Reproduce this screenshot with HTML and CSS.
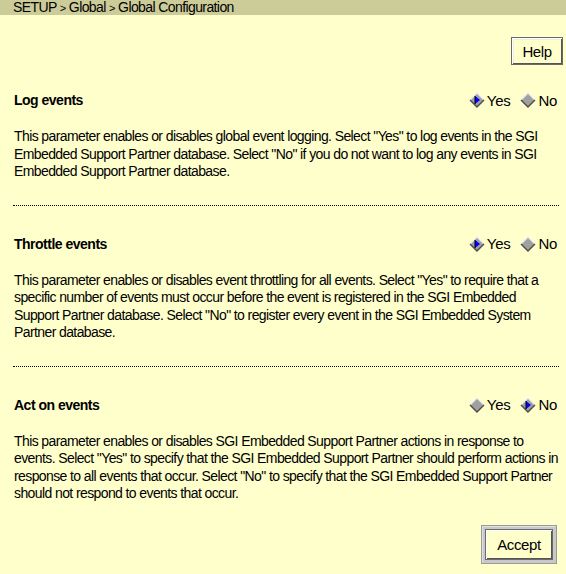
FILE: index.html
```html
<!DOCTYPE html>
<html>
<head>
<meta charset="utf-8">
<link rel="stylesheet" href="styles.css">
</head>
<body>
<div class="crumb">SETUP <span class="gt">&gt;</span> Global <span class="gt">&gt;</span> Global Configuration</div>
<div class="toolbar"><button class="btn help">Help</button></div>

<div class="section first">
  <div class="row">
    <span class="title">Log events</span>
    <div class="radios">
      <span class="opt"><svg class="dia" width="16" height="16" viewBox="0 0 16 16"><polygon points="8,1 15,8 8,15 1,8" fill="#a0a0a0"/><polyline points="1,8 8,1 15,8" fill="none" stroke="#ececec" stroke-width="1.4"/><polyline points="1,8 8,15 15,8" fill="none" stroke="#4a4a4a" stroke-width="1.4"/><polygon points="6,4 11,8 6,12" fill="#0000ff"/><line x1="6" y1="4" x2="6" y2="12" stroke="#000" stroke-width="1"/></svg>Yes</span>
      <span class="opt"><svg class="dia" width="16" height="16" viewBox="0 0 16 16"><polygon points="8,1 15,8 8,15 1,8" fill="#a0a0a0"/><polyline points="1,8 8,1 15,8" fill="none" stroke="#ececec" stroke-width="1.4"/><polyline points="1,8 8,15 15,8" fill="none" stroke="#4a4a4a" stroke-width="1.4"/></svg>No</span>
    </div>
  </div>
  <p class="desc">This parameter enables or disables global event logging. Select "Yes" to log events in the SGI Embedded Support Partner database. Select "No" if you do not want to log any events in SGI Embedded Support Partner database.</p>
</div>
<div class="sep"></div>

<div class="section">
  <div class="row">
    <span class="title">Throttle events</span>
    <div class="radios">
      <span class="opt"><svg class="dia" width="16" height="16" viewBox="0 0 16 16"><polygon points="8,1 15,8 8,15 1,8" fill="#a0a0a0"/><polyline points="1,8 8,1 15,8" fill="none" stroke="#ececec" stroke-width="1.4"/><polyline points="1,8 8,15 15,8" fill="none" stroke="#4a4a4a" stroke-width="1.4"/><polygon points="6,4 11,8 6,12" fill="#0000ff"/><line x1="6" y1="4" x2="6" y2="12" stroke="#000" stroke-width="1"/></svg>Yes</span>
      <span class="opt"><svg class="dia" width="16" height="16" viewBox="0 0 16 16"><polygon points="8,1 15,8 8,15 1,8" fill="#a0a0a0"/><polyline points="1,8 8,1 15,8" fill="none" stroke="#ececec" stroke-width="1.4"/><polyline points="1,8 8,15 15,8" fill="none" stroke="#4a4a4a" stroke-width="1.4"/></svg>No</span>
    </div>
  </div>
  <p class="desc">This parameter enables or disables event throttling for all events. Select "Yes" to require that a specific number of events must occur before the event is registered in the SGI Embedded Support Partner database. Select "No" to register every event in the SGI Embedded System Partner database.</p>
</div>
<div class="sep"></div>

<div class="section">
  <div class="row">
    <span class="title">Act on events</span>
    <div class="radios">
      <span class="opt"><svg class="dia" width="16" height="16" viewBox="0 0 16 16"><polygon points="8,1 15,8 8,15 1,8" fill="#a0a0a0"/><polyline points="1,8 8,1 15,8" fill="none" stroke="#ececec" stroke-width="1.4"/><polyline points="1,8 8,15 15,8" fill="none" stroke="#4a4a4a" stroke-width="1.4"/></svg>Yes</span>
      <span class="opt"><svg class="dia" width="16" height="16" viewBox="0 0 16 16"><polygon points="8,1 15,8 8,15 1,8" fill="#a0a0a0"/><polyline points="1,8 8,1 15,8" fill="none" stroke="#ececec" stroke-width="1.4"/><polyline points="1,8 8,15 15,8" fill="none" stroke="#4a4a4a" stroke-width="1.4"/><polygon points="6,4 11,8 6,12" fill="#0000ff"/><line x1="6" y1="4" x2="6" y2="12" stroke="#000" stroke-width="1"/></svg>No</span>
    </div>
  </div>
  <p class="desc">This parameter enables or disables SGI Embedded Support Partner actions in response to events. Select "Yes" to specify that the SGI Embedded Support Partner should perform actions in response to all events that occur. Select "No" to specify that the SGI Embedded Support Partner should not respond to events that occur.</p>
</div>

<div class="footer">
  <div class="frame"><button class="btn accept">Accept</button></div>
</div>
</body>
</html>
```

FILE: styles.css
```css
html, body {
  margin: 0;
  padding: 0;
  background: #ffffcc;
  color: #000;
  font-family: "Liberation Sans", Arial, sans-serif;
  font-size: 14px;
  letter-spacing: -0.6px;
}

.crumb {
  background: #cccc99;
  height: 15px;
  line-height: 15px;
  padding-left: 13px;
  font-size: 14px;
  overflow: hidden;
}

.gt {
  font-size: 11px;
}

.toolbar {
  display: flex;
  justify-content: flex-end;
  padding: 22px 3px 0 0;
}

.btn {
  font-family: inherit;
  font-size: 15px;
  letter-spacing: -0.4px;
  color: #000;
  background: #ffffcc;
  margin: 0;
  padding: 0;
  cursor: default;
}

.help {
  width: 52px;
  height: 28px;
  border: 1px solid #6a6a6a;
  box-shadow: inset 1px 1px 0 #ffffff, inset -1px -1px 0 #555555, inset 2px 2px 0 #f0f0e0;
}

.section {
  padding: 26px 9px 0 14px;
}

.sep + .section {
  padding-top: 29px;
}

.row {
  display: flex;
  justify-content: space-between;
  align-items: center;
  height: 18px;
}

.title {
  font-weight: bold;
  font-size: 14px;
  letter-spacing: -0.5px;
}

.radios {
  display: flex;
  gap: 10px;
  font-size: 15px;
  letter-spacing: -0.3px;
}

.opt {
  display: flex;
  align-items: center;
}

.dia {
  display: block;
  margin-right: 2px;
}

.desc {
  margin: 19px -6px 0 0;
  line-height: 17.5px;
  font-size: 14px;
}

.sep {
  margin: 24px 7px 0 13px;
  border-top: 1px dotted #000;
}

.footer {
  display: flex;
  justify-content: flex-end;
  padding: 22px 9px 0 0;
}

.frame {
  background: #c8c8c8;
  border: 1px solid #9a9a9a;
  padding: 3px;
  box-shadow: inset 1px 1px 0 #e0e0e0;
}

.accept {
  width: 68px;
  height: 31px;
  border: 1px solid #6a6a6a;
  box-shadow: inset 1px 1px 0 #ffffff, inset -1px -1px 0 #555555;
}
```
